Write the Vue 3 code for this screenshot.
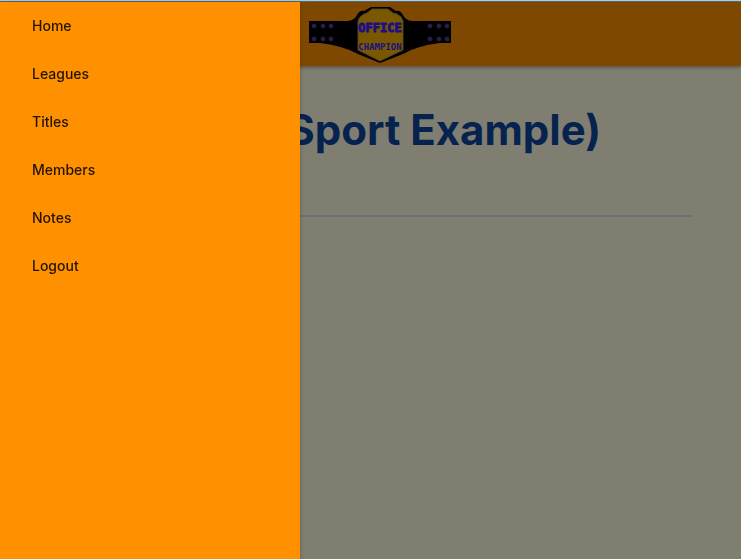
<script setup>
const links = ['Home', 'Leagues', 'Titles', 'Members', 'Notes', 'Logout']
const rivets = [14, 23, 31, 130, 139, 147]
</script>

<template>
  <div class="page">
    <header class="topbar">
      <a class="brand" href="#" aria-label="Office Champion">
        <svg width="160" height="64" viewBox="0 0 160 64">
          <path class="strap" d="M9 19H48Q55 18 57 13Q60 8 64 9L71 5H90L96 9Q100 8 103 13Q105 18 112 19H151V41H140Q116 44 103 52L80 61L58 52Q44 44 20 41H9Z" />
          <path class="plate" d="M60 15L64 12L67 11L72 7H88L93 11L97 12L101 15L103 19V48L80 59L58 48V19Z" />
          <g class="rivet">
            <template v-for="x in rivets" :key="x">
              <circle :cx="x" cy="24" r="2" />
              <circle :cx="x" cy="37" r="2" />
            </template>
          </g>
          <text class="word large" x="80" y="30">OFFICE</text>
          <text class="word small" x="80" y="48">CHAMPION</text>
        </svg>
      </a>
    </header>
    <main class="content">
      <h1>(Sport Example)</h1>
      <hr />
    </main>
    <div class="overlay"></div>
    <nav class="drawer" aria-label="Main">
      <ul>
        <li v-for="link in links" :key="link"><a href="#">{{ link }}</a></li>
      </ul>
    </nav>
  </div>
</template>

<style>
body {
  background: #fffce0;
}
</style>

<style scoped>
.page {
  min-height: 100vh;
  box-sizing: border-box;
  border-top: 2px solid #b9d3dc;
  font-family: Inter, "Liberation Sans", sans-serif;
}
.topbar {
  display: flex;
  justify-content: center;
  height: 64px;
  padding-left: 18px;
  background: #ff9100;
  box-shadow: 0 2px 2px rgba(0, 0, 0, 0.14), 0 1px 5px rgba(0, 0, 0, 0.2);
}
.brand svg {
  display: block;
}
.strap {
  fill: #000;
}
.plate {
  fill: #f5b000;
  stroke: #a68a4d;
  stroke-width: 1;
}
.rivet {
  fill: #4c30ff;
  stroke: #444;
  stroke-width: 1;
}
.word {
  font-family: "DejaVu Sans Mono", monospace;
  font-weight: 700;
  text-anchor: middle;
  fill: #3a20ff;
}
.large {
  font-size: 12px;
  stroke: #3a20ff;
  stroke-width: 1;
}
.small {
  font-size: 9px;
}
.content {
  padding: 36px 48px;
}
h1 {
  margin: 0 0 57px;
  padding-right: 92px;
  color: #0d47a1;
  font-size: 42px;
  font-weight: 700;
  line-height: 56px;
  text-align: right;
}
hr {
  height: 2px;
  margin: 0;
  border: 0;
  background: #e2dfdf;
}
.overlay {
  position: fixed;
  inset: 1px 0 0;
  background: rgba(0, 0, 0, 0.5);
}
.drawer {
  position: fixed;
  top: 2px;
  bottom: 0;
  left: 0;
  width: 300px;
  background: #ff9100;
  box-shadow: 0 2px 2px rgba(0, 0, 0, 0.14), 0 1px 5px rgba(0, 0, 0, 0.2);
}
ul {
  margin: 0;
  padding: 0;
  list-style: none;
}
li a {
  display: block;
  padding: 0 32px;
  color: rgba(0, 0, 0, 0.87);
  font-size: 14px;
  font-weight: 500;
  line-height: 48px;
  text-decoration: none;
}
</style>
